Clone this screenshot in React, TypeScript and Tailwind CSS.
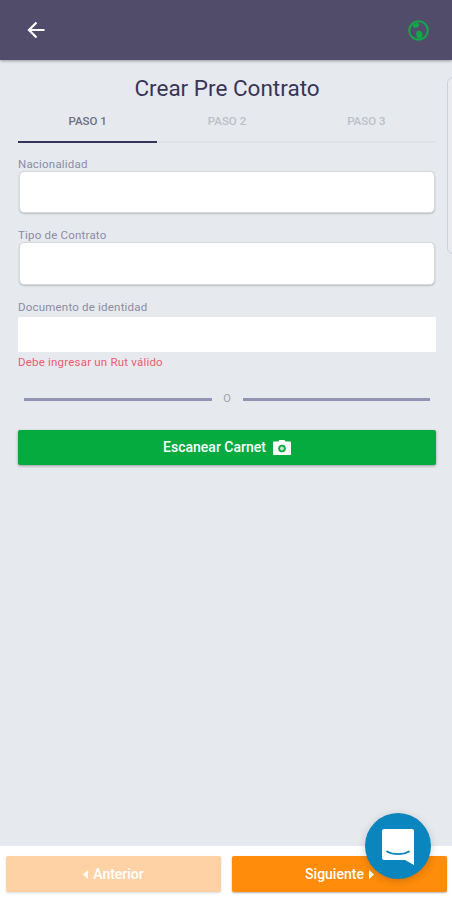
// Crear Pre Contrato, step 1 of the wizard
const font = { fontFamily: 'Roboto, sans-serif' }

const steps = ['PASO 1', 'PASO 2', 'PASO 3']

function Label({ children }: { children: string }) {
  return <p className="text-[11.500px] leading-[14px] tracking-[0.2px] text-[#8C8CA3]">{children}</p>
}

function SelectBox({ className }: { className: string }) {
  return <div className={`mx-px rounded-[5px] border border-[#D6D6DB] bg-white shadow-[0_1px_2px_rgba(0,0,0,0.2)] ${className}`} />
}

function CameraIcon() {
  return (
    <svg width="18" height="15" viewBox="0 0 18 15">
      <path d="M1 1.500h4.500L6.500 0h5l1 1.500H17a1 1 0 0 1 1 1V14a1 1 0 0 1-1 1H1a1 1 0 0 1-1-1V2.500a1 1 0 0 1 1-1z" fill="#fff" />
      <circle cx="9" cy="8.500" r="3.800" fill="#05AB3F" />
      <circle cx="9" cy="8.500" r="2" fill="#fff" fillOpacity="0.75" />
    </svg>
  )
}

export default function App() {
  return (
    <div className="relative flex h-[900px] w-[452px] flex-col overflow-hidden bg-[#E6EAEE]" style={font}>
      {/* Top bar */}
      <header className="flex h-[60px] shrink-0 items-center justify-between pl-[27px] pr-[23px] bg-[#524C6B] shadow-[0_1px_3px_rgba(0,0,0,0.35)]">
        <svg width="18" height="18" viewBox="0 0 18 18" fill="none" stroke="#fff" strokeWidth="2.200">
          <path d="M17.500 9H2M9.500 1.500 2 9l7.500 7.500" />
        </svg>
        <svg width="21" height="21" viewBox="0 0 21 21" fill="#12A84A">
          <circle cx="10.500" cy="10.500" r="9.300" fill="none" stroke="#12A84A" strokeWidth="2" />
          <path d="M5 4.500c2-1.500 5-2 6-1 .5 1.500-.5 3.500-2 4-1.500.7-3 .3-4-.6z" />
          <path d="M9.500 11c2-.5 4 .5 4.800 2 .4 1.500.2 3.500-.8 5-1.500.7-3 .7-4 .3-.4-1.500-1.200-2.800-1.300-4.300 0-1.300.3-2.500 1.300-3z" />
        </svg>
      </header>

      {/* Card peeking in from the next page */}
      <div className="absolute left-[447px] top-[77px] h-[177px] w-[20px] rounded-[6px] border border-[#CFD1D8] bg-[#E9EBF0]" />

      <main className="flex flex-1 flex-col pl-[18px] pr-4">
        <h1 className="mt-[16px] text-center text-[22.500px] leading-6 text-[#37345A]">Crear Pre Contrato</h1>

        {/* Stepper */}
        <div className="grid grid-cols-3 border-b-2 border-[#E0E2E8]">
          {steps.map((step, i) => (
            <div
              key={step}
              className={`-mb-[2px] flex h-[43px] items-center justify-center border-b-2 pt-[2px] text-[11.500px] font-medium ${
                i === 0 ? 'border-[#37345A] text-[#6E6E82]' : 'border-transparent text-[#BDBFC8]'
              }`}
            >
              {step}
            </div>
          ))}
        </div>

        <div className="mt-[14px]">
          <Label>Nacionalidad</Label>
        </div>
        <SelectBox className="h-[42px]" />

        <div className="mt-[15px]">
          <Label>Tipo de Contrato</Label>
        </div>
        <SelectBox className="h-[43px]" />

        <div className="mt-[15px]">
          <Label>Documento de identidad</Label>
        </div>
        <div className="mt-[3px] h-[35px] bg-white" />
        <p className="mt-[3px] text-[11.500px] leading-[14px] tracking-[0.2px] text-[#EE5A6E]">Debe ingresar un Rut válido</p>

        {/* Divider */}
        <div className="mt-[24px] flex items-center px-[6px]">
          <div className="h-[3px] flex-1 bg-[#9393B5]" />
          <span className="w-[31px] text-center text-[11px] leading-3 text-[#A0A0A8]">O</span>
          <div className="h-[3px] flex-1 bg-[#9393B5]" />
        </div>

        <button className="mt-[25px] flex h-[35px] items-center justify-center gap-[7px] rounded-[2px] bg-[#05AB3F] text-[14px] font-medium text-white shadow-[0_1px_3px_rgba(0,0,0,0.35)]">
          Escanear Carnet
          <CameraIcon />
        </button>
      </main>

      {/* Bottom actions */}
      <footer className="flex h-[54px] shrink-0 items-start gap-[11px] bg-white pl-[6px] pr-[5px] pt-[10px]">
        <button className="flex h-[36px] flex-1 items-center justify-center gap-[5px] rounded-[2px] bg-[#FFD2A6] text-[14px] font-medium text-white shadow-[0_1px_2px_rgba(0,0,0,0.15)]">
          <svg width="5" height="9" viewBox="0 0 5 9" fill="#fff"><path d="M5 0v9L0 4.500z" /></svg>
          Anterior
        </button>
        <button className="flex h-[36px] flex-1 items-center justify-center gap-[5px] rounded-[2px] bg-[#FF8C0A] text-[14px] font-medium text-white shadow-[0_1px_2px_rgba(0,0,0,0.3)]">
          Siguiente
          <svg width="5" height="9" viewBox="0 0 5 9" fill="#fff"><path d="M0 0v9l5-4.500z" /></svg>
        </button>
      </footer>

      {/* Chat launcher */}
      <div className="absolute left-[365px] top-[813px] flex h-[66px] w-[66px] items-center justify-center rounded-full bg-[#0A85BE] shadow-[0_2px_8px_rgba(0,0,0,0.18)]">
        <svg width="32" height="36" viewBox="0 0 32 36" className="mt-[1px]">
          <path d="M2 0h28a2 2 0 0 1 2 2v34l-9-5H2a2 2 0 0 1-2-2V2a2 2 0 0 1 2-2z" fill="#fff" />
          <path d="M5 22.500c6 3.500 16 3.500 22 0" fill="none" stroke="#0A85BE" strokeWidth="1.800" strokeLinecap="round" />
        </svg>
      </div>
    </div>
  )
}
